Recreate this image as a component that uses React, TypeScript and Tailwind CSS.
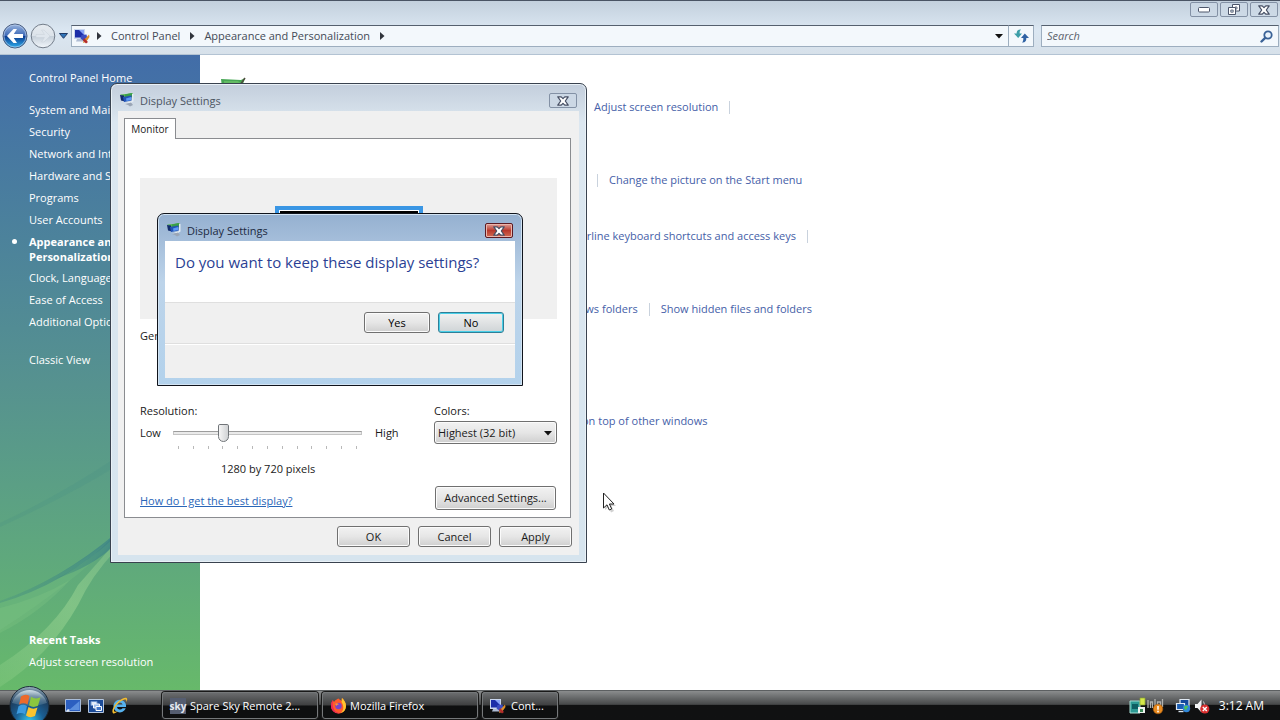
import type { ReactNode } from "react";

const navLink = "block text-white hover:underline";
const button =
  "rounded-[3px] border border-[#707070] bg-linear-to-b from-[#f2f2f2] via-[#e6e6e6] via-50% to-[#cfcfcf] text-center shadow-[inset_0_0_0_1px_#fbfbfb]";

function CloseGlyph() {
  return (
    <svg width="12" height="10" viewBox="0 0 12 10" aria-hidden="true">
      <path
        d="M.8.8h3.400L6 2.700 7.800.8h3.400L8.300 5l2.900 4.200H7.800L6 7.300 4.200 9.200H.8L3.700 5z"
        fill="#fff"
        stroke="#454e63"
        strokeWidth="1.200"
        strokeLinejoin="round"
      />
    </svg>
  );
}

function DisplayIcon() {
  return (
    <svg className="mt-1" width="14" height="14" viewBox="0 0 14 14" aria-hidden="true">
      <path d="M0 1.500l6-.5 7-1v1.500L4 4z" fill="#55b84e" />
      <path d="M5 1.500L11.500 0l1 1v3L8 5.500 5 4z" fill="#3a9e4a" />
      <path d="M0 2l4 .5 1 6L1 7.500z" fill="#122c6c" />
      <path d="M3 4l8.500-1.500v5L4 9z" fill="#2354b8" />
      <path d="M6 5.500l5-1.500v3L6.500 8z" fill="#5c9bf5" />
      <path d="M12 .5l1.500.5v7.500L11 10l-6 .5 7-2.500z" fill="#e4ebf2" />
      <path d="M5 11l6-1.500 2 2.500-3 1.500-2-1.500z" fill="#9aa5b5" />
    </svg>
  );
}

function ControlPanelIcon() {
  return (
    <svg width="16" height="16" viewBox="0 0 16 16" aria-hidden="true">
      <path d="M0 1h11v10H0z" fill="#c9d6ee" />
      <path d="M1 2h9v7.500H1z" fill="#1c2ea8" />
      <path d="M5 2h5v5z" fill="#86a2f6" />
      <path d="M3 11h6l1 2.500H2z" fill="#aebcd4" />
      <path d="M7.500 7l5-.5 1 5-3 2-4-3z" fill="#3b4cc0" />
      <path d="M15 6.500L10 12l-1 3 3-1 3.500-5z" fill="#dd8f2a" />
      <path d="M10 10l4 4-2 1.500-3-3z" fill="#b32c2c" />
    </svg>
  );
}

function Crumb({ children }: { children: ReactNode }) {
  return (
    <>
      <svg width="5" height="8" viewBox="0 0 5 8" aria-hidden="true">
        <path d="M0 0l4.500 4L0 8z" fill="#30343c" />
      </svg>
      {children}
    </>
  );
}

function Header() {
  const winButton =
    "flex h-[15px] w-7 items-center justify-center rounded-[2px] border border-[#8391a5] bg-[#ccd8e5]/70";
  return (
    <header className="flex h-[55px] shrink-0 flex-col border-t border-b border-t-[#4a5464] border-b-[#b3c3d3] bg-linear-to-b from-[#c3d0dd] via-[#dbe7f2] via-55% to-[#d7e1ea]">
      <div className="flex h-6 shrink-0 justify-end gap-[2px] pt-px pr-[2px]">
        <button className={winButton} aria-label="Minimize">
          <svg width="12" height="6" viewBox="0 0 12 6" aria-hidden="true">
            <rect x=".5" y=".5" width="11" height="4.500" rx="1" fill="#fff" stroke="#4d566b" />
          </svg>
        </button>
        <button className={winButton} aria-label="Restore">
          <svg width="12" height="11" viewBox="0 0 12 11" aria-hidden="true">
            <path d="M4.500.5h7v6.500h-7z" fill="#fff" stroke="#4d566b" />
            <path d="M7 3h2v2H7z" fill="#fff" stroke="#4d566b" strokeWidth=".8" />
            <path d="M.5 3.500h7v7h-7z" fill="#fff" stroke="#4d566b" />
            <path d="M2.800 6h2.400v2.200H2.800z" fill="#ccd8e5" stroke="#4d566b" strokeWidth=".8" />
          </svg>
        </button>
        <button className={winButton} aria-label="Close">
          <CloseGlyph />
        </button>
      </div>
      <div className="flex h-[22px] items-center">
        <div className="flex items-center">
          <button aria-label="Back" className="ml-[2px]">
            <svg width="26" height="26" viewBox="0 0 26 26" aria-hidden="true">
              <defs>
                <linearGradient id="back" x1="0" y1="0" x2="0" y2="1">
                  <stop offset="0" stopColor="#9ab5de" />
                  <stop offset=".48" stopColor="#3f6bb8" />
                  <stop offset=".52" stopColor="#0b3c90" />
                  <stop offset="1" stopColor="#2fb2f0" />
                </linearGradient>
              </defs>
              <circle cx="13" cy="13" r="12" fill="url(#back)" stroke="#4c5f80" />
              <circle cx="13" cy="13" r="11" fill="none" stroke="#c2d4ee" strokeOpacity=".6" />
              <path d="M5 13l6.500-7h3.500L11.800 11H21v4h-9.200l3.200 5h-3.500z" fill="#fff" />
            </svg>
          </button>
          <button aria-label="Forward" className="ml-[2px]">
            <svg width="26" height="26" viewBox="0 0 26 26" aria-hidden="true">
              <defs>
                <linearGradient id="fwd" x1="0" y1="0" x2="0" y2="1">
                  <stop offset="0" stopColor="#e6ebf0" />
                  <stop offset=".5" stopColor="#dce3ea" />
                  <stop offset=".52" stopColor="#c6d0da" />
                  <stop offset="1" stopColor="#f2f7fb" />
                </linearGradient>
              </defs>
              <circle cx="13" cy="13" r="11.800" fill="url(#fwd)" stroke="#737d8a" />
              <path d="M20 13l-6-6h-2.500l3 4.500H6v3h8.500l-3 4.500H14z" fill="#dfe6ed" stroke="#c8d0d9" strokeWidth=".5" />
            </svg>
          </button>
          <button aria-label="Recent pages" className="ml-[3px]">
            <svg width="9" height="6" viewBox="0 0 9 6" aria-hidden="true">
              <path d="M.5.5h8l-4 4.800z" fill="#2f74b8" stroke="#1e3a66" />
            </svg>
          </button>
        </div>
        <nav
          aria-label="Address"
          className="ml-[3px] flex h-[22px] min-w-0 flex-1 items-center border border-[#9daebf] border-t-[#55606e] bg-[#f3f8fc] text-[#444b57]"
        >
          <span className="mr-[7px] ml-[2px]">
            <ControlPanelIcon />
          </span>
          <Crumb>
            <a href="#control-panel" className="mr-[10px] ml-[9px]">Control Panel</a>
          </Crumb>
          <Crumb>
            <a href="#appearance" className="mr-[10px] ml-[9px]">Appearance and Personalization</a>
          </Crumb>
          <Crumb>
            <span className="flex-1" />
          </Crumb>
          <button aria-label="Previous locations" className="mr-[5px]">
            <svg width="8" height="5" viewBox="0 0 8 5" aria-hidden="true">
              <path d="M0 0h8L4 4.500z" fill="#111" />
            </svg>
          </button>
        </nav>
        <button
          aria-label="Refresh"
          className="flex h-[22px] w-[25px] items-center justify-center border border-l-0 border-[#9daebf] border-t-[#55606e] bg-[#f3f8fc]"
        >
          <svg width="15" height="14" viewBox="0 0 15 14" aria-hidden="true">
            <path d="M7 .5C3.800.3 2.500 2 2.700 4.500H0L4.200 9 8 4.500H5.700C5.500 2.800 5.900 1.500 7 .5z" fill="#3d9ea8" />
            <path d="M8 13.500c3.200.2 4.500-1.500 4.300-4.500H15l-4.200-4.500L7 9h2.300c.2 1.800-.2 3.500-1.300 4.500z" fill="#2f62a4" />
          </svg>
        </button>
        <form role="search" className="mr-px ml-[7px] flex h-[22px] w-[238px] items-center border border-[#9daebf] border-t-[#55606e] bg-[#f3f8fc] pr-[5px] pl-[5px]">
          <input
            aria-label="Search"
            placeholder="Search"
            className="min-w-0 flex-1 bg-transparent italic outline-none placeholder:text-[#5b626c]"
          />
          <svg width="13" height="13" viewBox="0 0 13 13" aria-hidden="true">
            <circle cx="8" cy="5" r="3.700" fill="#e8f2fb" stroke="#3a6297" strokeWidth="1.800" />
            <path d="M5.200 7.800L1.500 11.500" stroke="#3a6297" strokeWidth="2.400" strokeLinecap="round" />
          </svg>
        </form>
      </div>
    </header>
  );
}

function Sidebar() {
  const items = ["System and Maintenance", "Security", "Network and Internet", "Hardware and Sound", "Programs", "User Accounts"];
  const more = ["Clock, Language, and Region", "Ease of Access", "Additional Options"];
  return (
    <aside className="relative flex w-[200px] shrink-0 flex-col overflow-hidden bg-linear-to-b from-[#426da8] via-[#56928f] via-52% to-[#67b96a] pb-[21px] leading-[15px] whitespace-nowrap text-white">
      <svg className="absolute inset-0 h-full w-full" viewBox="0 0 200 635" preserveAspectRatio="none" aria-hidden="true">
        <defs>
          <linearGradient id="ray" x1="0" y1="1" x2="1" y2="0">
            <stop offset="0" stopColor="#a6dc98" stopOpacity=".2" />
            <stop offset=".6" stopColor="#a6dc98" stopOpacity=".45" />
            <stop offset="1" stopColor="#a6dc98" stopOpacity=".3" />
          </linearGradient>
          <linearGradient id="blade" x1="0" y1="0" x2="1" y2="0">
            <stop offset="0" stopColor="#3f8a7c" stopOpacity=".35" />
            <stop offset="1" stopColor="#3b8288" stopOpacity=".75" />
          </linearGradient>
        </defs>
        <path d="M0 468Q60 440 115 403V412Q70 440 0 472z" fill="#438b84" fillOpacity=".18" />
        <path d="M0 546Q60 525 115 481V486Q70 530 0 575z" fill="#74bd82" fillOpacity=".35" />
        <path d="M0 546Q60 525 115 479V482Q65 529 0 548z" fill="url(#blade)" />
        <path d="M55 524Q90 508 115 479V490Q92 512 55 524z" fill="url(#blade)" />
        <path d="M0 610Q55 575 78 530L115 488V496Q92 520 78 550 50 600 0 632z" fill="url(#ray)" />
        <path d="M0 553Q40 543 70 525 40 558 0 578z" fill="#93d08d" fillOpacity=".2" />
      </svg>
      <nav aria-label="Control Panel" className="relative flex flex-1 flex-col pt-[15px] pl-[29px]">
        <a href="#home" className={navLink}>Control Panel Home</a>
        <ul className="mt-[17px] flex flex-col gap-[7px]">
          {items.map((t) => (
            <li key={t}><a href="#section" className={navLink}>{t}</a></li>
          ))}
          <li className="relative font-bold">
            <span className="absolute top-[5px] -left-[17px] size-[5px] rounded-full bg-white" />
            <a href="#appearance" className={navLink}>Appearance and<br />Personalization</a>
          </li>
          {more.map((t) => (
            <li key={t} className="-mt-px mb-px"><a href="#section" className={navLink}>{t}</a></li>
          ))}
        </ul>
        <a href="#classic" className="mt-[22px] text-white">Classic View</a>
      </nav>
      <section className="relative flex flex-col gap-[7px] pl-[29px]">
        <h2 className="font-bold">Recent Tasks</h2>
        <a href="#resolution" className={navLink}>Adjust screen resolution</a>
      </section>
    </aside>
  );
}

function Content() {
  const row = "flex h-4 items-center gap-[11px]";
  const bar = <span className="h-[13px] w-px bg-[#c9d2dd]" />;
  return (
    <main className="min-w-0 flex-1 overflow-hidden bg-white pt-[22px] leading-4 whitespace-nowrap text-[#4560a8]">
      <div className="flex h-[22px] items-start gap-4 pl-[21px]">
        <svg width="26" height="22" viewBox="0 0 26 22" aria-hidden="true">
          <path d="M0 2l20 1 4-2-2 6v12H2z" fill="#47a754" />
          <path d="M3 4h14l4 3v10H4z" fill="#63bb63" />
          <path d="M24 1l-7 10" stroke="#4c4c3c" strokeWidth="1.500" />
        </svg>
        <h1 className="pt-[5px] text-[16px] leading-5 text-[#1f3f8f]">Personalization</h1>
      </div>
      <div className={`${row} pl-[394px]`}><a href="#a">Adjust screen resolution</a>{bar}</div>
      <div className={`${row} mt-[57px] pl-[397px]`}>{bar}<a href="#b">Change the picture on the Start menu</a></div>
      <div className={`${row} mt-10 pl-[359px]`}><a href="#c">Underline keyboard shortcuts and access keys</a>{bar}</div>
      <div className={`${row} mt-[57px] pl-[330px]`}><a href="#d">Use Windows folders</a>{bar}<a href="#e">Show hidden files and folders</a></div>
      <div className={`${row} mt-24 pl-[382px]`}><a href="#f">on top of other windows</a></div>
    </main>
  );
}

function SettingsWindow() {
  return (
    <section
      aria-label="Display Settings"
      className="absolute top-[83px] left-[110px] flex h-[480px] w-[477px] flex-col rounded-t-[7px] border border-[#39424f] bg-linear-to-b from-[#c3cedc] via-[#dce7f0] via-8% to-[#d6e4ee] px-[7px] pb-[7px] text-[#1a1a1a] shadow-[inset_0_0_0_1px_#e9f1f7]"
    >
      <div className="flex h-[27px] shrink-0 items-center pr-[2px] pl-[2px]">
        <DisplayIcon />
        <h2 className="ml-[6px] flex-1 pt-[6px] text-[#4c5562]">Display Settings</h2>
        <button aria-label="Close settings" className="mt-[6px] flex h-[15px] w-7 items-center justify-center rounded-[2px] border border-[#8391a5] bg-[#ccd8e5]">
          <CloseGlyph />
        </button>
      </div>
      <div className="flex min-h-0 flex-1 flex-col bg-[#f0f0f0] pt-[7px] pr-2 pb-2 pl-[6px]">
        <div role="tablist" className="z-10 -mb-px flex">
          <button role="tab" aria-selected="true" className="h-[21px] w-[52px] border border-b-0 border-[#8a8c90] bg-white text-[10px]">Monitor</button>
        </div>
        <div role="tabpanel" className="flex flex-1 flex-col border border-[#8a8c90] bg-white pt-[39px] pr-[13px] pb-[7px] pl-[15px]">
          <div className="flex h-[141px] justify-center bg-[#f0f0f0] pt-7">
            <div className="h-[90px] w-[148px] border-4 border-[#3a96e4] bg-black shadow-[inset_0_0_0_1px_#fff]" />
          </div>
          <p className="mt-[9px] leading-4">Generic PnP Monitor</p>
          <div className="mt-[59px] flex justify-between">
            <div className="flex w-[270px] flex-col">
              <label htmlFor="resolution" className="leading-4">Resolution:</label>
              <div className="mt-[6px] flex">
                <span className="w-[33px] leading-4">Low</span>
                <div className="-mt-[2px] w-[189px]">
                  <input
                    id="resolution"
                    type="range"
                    min={0}
                    max={12}
                    defaultValue={3}
                    className="block h-[19px] w-full appearance-none bg-transparent [&::-webkit-slider-runnable-track]:h-[4px] [&::-webkit-slider-runnable-track]:border [&::-webkit-slider-runnable-track]:border-[#c4c4c4] [&::-webkit-slider-runnable-track]:border-t-[#9c9c9c] [&::-webkit-slider-runnable-track]:bg-[#eaeaea] [&::-webkit-slider-thumb]:-mt-[8px] [&::-webkit-slider-thumb]:h-[18px] [&::-webkit-slider-thumb]:w-[11px] [&::-webkit-slider-thumb]:appearance-none [&::-webkit-slider-thumb]:rounded-[2px_2px_6px_6px] [&::-webkit-slider-thumb]:border [&::-webkit-slider-thumb]:border-[#707478] [&::-webkit-slider-thumb]:bg-linear-to-r [&::-webkit-slider-thumb]:from-[#f6f6f6] [&::-webkit-slider-thumb]:to-[#d0d2d4]"
                  />
                  <div className="mt-1 flex justify-between px-[5px]">
                    {Array.from({ length: 13 }, (_, i) => (
                      <span key={i} className="h-[3px] w-px bg-[#b9b9b9]" />
                    ))}
                  </div>
                </div>
                <span className="ml-[13px] leading-4">High</span>
              </div>
              <output htmlFor="resolution" className="mt-3 pl-[81px] leading-4">1280 by 720 pixels</output>
              <a href="#help" className="mt-4 self-start leading-4 text-[#2a66b8] underline">How do I get the best display?</a>
            </div>
            <div className="flex w-[123px] flex-col">
              <label htmlFor="colors" className="leading-4">Colors:</label>
              <div className="relative mt-[2px]">
                <select id="colors" className={`${button} h-[23px] w-full appearance-none pl-[3px] text-left`}>
                  <option>Highest (32 bit)</option>
                </select>
                <svg className="pointer-events-none absolute top-[10px] right-[5px]" width="8" height="5" viewBox="0 0 8 5" aria-hidden="true">
                  <path d="M0 0h8L4 4.500z" fill="#111" />
                </svg>
              </div>
              <button className={`${button} mt-[42px] ml-px h-6 w-[121px]`}>Advanced Settings...</button>
            </div>
          </div>
        </div>
        <div className="mt-2 -mr-px flex justify-end gap-2">
          <button className={`${button} h-[21px] w-[73px]`}>OK</button>
          <button className={`${button} h-[21px] w-[73px]`}>Cancel</button>
          <button className={`${button} h-[21px] w-[73px]`}>Apply</button>
        </div>
      </div>
    </section>
  );
}

function ConfirmDialog() {
  return (
    <section
      role="dialog"
      aria-label="Display Settings confirmation"
      className="absolute top-[213px] left-[157px] flex h-[173px] w-[366px] flex-col rounded-t-[7px] border border-[#10141c] bg-linear-to-b from-[#95b0d0] via-[#bdd4ea] via-40% to-[#b3d2ec] px-[7px] pb-[7px] shadow-[inset_0_0_0_1px_#d3e4f3]"
    >
      <div className="flex h-[27px] shrink-0 items-center pr-[2px] pl-[2px]">
        <DisplayIcon />
        <h2 className="ml-[6px] flex-1 pt-[6px] text-[#1d2a42]">Display Settings</h2>
        <button aria-label="Close dialog" className="mt-[6px] flex h-[15px] w-7 items-center justify-center rounded-[2px] border border-[#5c1a22] bg-linear-to-b from-[#dd9c97] via-[#b8382c] via-50% to-[#d06a52] shadow-[inset_0_0_0_1px_#eab5ab]">
          <CloseGlyph />
        </button>
      </div>
      <div className="h-[61px] bg-white pt-[9px] pl-[10px]">
        <p className="text-[15px] leading-6 text-[#2b3f94]">Do you want to keep these display settings?</p>
      </div>
      <div className="flex h-[41px] items-start justify-end gap-2 border-t border-[#dfdfdf] bg-[#f0f0f0] pt-[9px] pr-[11px]">
        <button className={`${button} h-[21px] w-[66px]`}>Yes</button>
        <button className="h-[21px] w-[66px] rounded-[3px] border border-[#2f7f97] bg-linear-to-b from-[#f2f2f2] to-[#cfd4d6] shadow-[inset_0_0_0_1px_#48cfe8]">No</button>
      </div>
      <div className="flex-1 border-t border-[#dfdfdf] bg-[#f0f0f0] shadow-[inset_0_1px_0_#fff]" />
    </section>
  );
}

function StartOrb() {
  return (
    <svg className="absolute -top-[6px] left-[8px]" width="44" height="44" viewBox="0 0 44 44" aria-hidden="true">
      <defs>
        <radialGradient id="orb" cx=".5" cy=".9" r=".9">
          <stop offset="0" stopColor="#35c8ee" />
          <stop offset=".4" stopColor="#1a5f94" />
          <stop offset=".75" stopColor="#1d3c5c" />
          <stop offset="1" stopColor="#9fb6c4" />
        </radialGradient>
        <linearGradient id="gloss" x1="0" y1="0" x2="0" y2="1">
          <stop offset="0" stopColor="#e4f0f5" stopOpacity=".85" />
          <stop offset="1" stopColor="#7fa6bc" stopOpacity=".2" />
        </linearGradient>
      </defs>
      <circle cx="21.500" cy="21" r="19.500" fill="url(#orb)" stroke="#1a2a38" />
      <path d="M4 18a18 17 0 0 1 35 0q-16 6-35 0z" fill="url(#gloss)" />
      <path d="M13 11.500q4.500-3 8.500-.5l-2 8.500q-4-2.500-8.500 0z" fill="#ec6a2c" />
      <path d="M23 11.800q4.500 3 9.500.5l-2.500 8.500q-5 2.500-9-.5z" fill="#8cc63e" />
      <path d="M10.500 21.200q4.500-2.800 8.500-.2l-2 8.300q-4-2.500-8.500 0z" fill="#3c9be0" />
      <path d="M20.500 22q4.500 3 9 .5L27 31q-5 2.500-9-.5z" fill="#fbc42f" />
    </svg>
  );
}

function Taskbar() {
  const task =
    "flex h-[27px] items-center rounded-[3px] border border-[#75787a] bg-linear-to-b from-[#6a6c6e] via-[#3f4041] via-48% to-[#0e0f10] to-52% pl-[7px] text-left text-white shadow-[0_0_0_1px_#1a1a1a]";
  return (
    <footer className="relative flex h-[30px] shrink-0 items-center border-t border-[#5c5f61] bg-linear-to-b from-[#8b8d8e] via-[#47494a] via-46% to-[#101112] to-50% whitespace-nowrap text-white">
      <button aria-label="Start" className="h-full w-[65px] shrink-0"><StartOrb /></button>
      <div className="flex w-[97px] shrink-0 items-center gap-[7px]">
        <button aria-label="Show desktop">
          <svg width="16" height="14" viewBox="0 0 16 14" aria-hidden="true">
            <path d="M.5.5h15v12H.5z" fill="#2c5fc0" stroke="#a8bcd8" />
            <path d="M4 11L14.500 2v9z" fill="#6fa2ea" fillOpacity=".7" />
            <path d="M1 12l2-2 2 1-2 2z" fill="#d8e4f4" />
          </svg>
        </button>
        <button aria-label="Switch windows">
          <svg width="16" height="14" viewBox="0 0 16 14" aria-hidden="true">
            <path d="M.5.5h15v13H.5z" fill="#1d4c98" stroke="#b4c6de" />
            <path d="M3 2.500h6v4H3z" fill="#dfeaf8" stroke="#6c92cc" />
            <path d="M5.500 5h6v4h-6z" fill="#9dbdec" stroke="#f2f7fd" />
            <path d="M8 7.500h5.500v4H8z" fill="#4377c8" stroke="#fff" />
          </svg>
        </button>
        <button aria-label="Internet Explorer">
          <svg width="17" height="17" viewBox="0 0 17 17" aria-hidden="true">
            <path
              fillRule="evenodd"
              d="M15 10H6a3 3 0 0 0 5.500 1.200h3.200A6.300 6.300 0 1 1 15 10zM6 7.600h5.600a2.900 2.900 0 0 0-5.600 0z"
              fill="#56b2ee"
            />
            <path d="M2 16.200C-1 13 7 2 14 .8c3.400-.4 2.200 3.200 1 4.400.5-2 .3-3.200-1.500-2.700C8 4 1.500 12 3.300 14.500c1 .7 2.700 0 3.700-.5-2 1.800-4 3-5 2.200z" fill="#f3bd2f" />
          </svg>
        </button>
      </div>
      <div className="flex min-w-0 flex-1 gap-1">
        <button className={`${task} w-[156px]`}>
          <span aria-hidden="true" className="flex size-4 items-center justify-center bg-[#555d70] text-[10px] leading-3 font-bold text-[#e4e9f2]">sky</span>
          <span className="ml-1">Spare Sky Remote 2...</span>
        </button>
        <button className={`${task} w-[156px]`}>
          <svg width="17" height="17" viewBox="0 0 17 17" aria-hidden="true">
            <path d="M8.500 1.500C10 3 11 3 11.500 4c.5-1 0-2 .5-3 2 2 4 4.500 4 8a7.500 7.500 0 0 1-15 0C1 6 2 4 3 3c.2 1.200.6 1.700 1.500 1.500C5.500 2.500 7 2.500 8.500 1.500z" fill="#ff5a2a" />
            <path d="M12 1c2 2 4 4.500 4 8a7.500 7.500 0 0 1-5 7c3-3 3-7 .5-11 .5-1.500 0-2.500.5-4z" fill="#ffc62e" />
            <path d="M1 9a7.500 7.500 0 0 0 10 7c-4 0-7-2-7.500-5C2.500 9.500 2.500 6 3 3 2 4 1 6 1 9z" fill="#ec2657" />
            <circle cx="8.500" cy="9" r="3.200" fill="#7a45c8" />
            <path d="M5 7c1.500-1.200 3-.5 4 .3-1.500.2-2 .8-2.300 1.700z" fill="#ff9a2e" />
          </svg>
          <span className="ml-[3px]">Mozilla Firefox</span>
        </button>
        <button className={`${task} w-[76px]`}>
          <ControlPanelIcon />
          <span className="ml-[5px]">Cont...</span>
        </button>
      </div>
      <div className="flex items-center pr-4">
        <svg width="36" height="18" viewBox="0 0 36 18" aria-hidden="true">
          <path d="M1 4h10v12H1z" fill="#2d9a94" stroke="#a6ded4" />
          <path d="M3 7h6v5H3z" fill="#0d5e62" />
          <path d="M11 1h5v7h-5z" fill="#d5e84a" stroke="#8aa32e" strokeWidth=".7" />
          <path d="M9 10h7v6H9z" fill="#eef3f0" />
          <path d="M11 12h3v3h-3z" fill="#3a8a58" />
          <path d="M19 3v8M21.500 11V5h2v6M26 2v9M28.500 8h3V5h-3v6M33.500 2v8" stroke="#b0b1ae" strokeWidth="1.300" fill="none" />
          <circle cx="29" cy="12" r="4.800" fill="#e88a1e" stroke="#a85c10" strokeWidth=".6" />
          <path d="M29 9v3.800" stroke="#fff" strokeWidth="1.500" />
          <circle cx="29" cy="14.500" r=".9" fill="#fff" />
        </svg>
        <svg className="ml-[10px]" width="16" height="16" viewBox="0 0 16 16" aria-hidden="true">
          <path d="M5 1.500h9v7H5z" fill="#14499c" stroke="#dfe8f2" strokeWidth="1.200" />
          <path d="M1.500 5.500h8v6h-8z" fill="#1c5fb4" stroke="#dfe8f2" strokeWidth="1.200" />
          <path d="M3.500 13.500h5" stroke="#dfe8f2" strokeWidth="1.400" />
          <circle cx="11.500" cy="10.500" r="3.700" fill="#2f86dc" />
          <path d="M9 9c2-2 4-1 4 0s-2 1-1.500 3.500C10 12 9 11 9 9z" fill="#4cc05a" />
        </svg>
        <svg className="ml-[3px]" width="16" height="16" viewBox="0 0 16 16" aria-hidden="true">
          <path d="M1 6h2.500L7.500 1.500v13L3.500 10H1z" fill="#f2f4f6" />
          <path d="M9.500 3.500q2 3 .5 7" stroke="#c8ccd0" fill="none" />
          <circle cx="10.800" cy="11" r="4.600" fill="#d92f2f" />
          <path d="M8.800 9l4 4M12.800 9l-4 4" stroke="#fff" strokeWidth="1.400" />
        </svg>
        <time className="ml-[9px] text-[12px]">3:12 AM</time>
      </div>
    </footer>
  );
}

export default function App() {
  return (
    <div className="relative flex h-screen flex-col overflow-hidden font-['Open_Sans','Noto_Sans',sans-serif] text-[11px] leading-4">
      <Header />
      <div className="flex min-h-0 flex-1">
        <Sidebar />
        <Content />
      </div>
      <Taskbar />
      <SettingsWindow />
      <ConfirmDialog />
      <svg className="pointer-events-none absolute top-[492px] left-[602px]" width="15" height="21" viewBox="0 0 15 21" aria-hidden="true">
        <path d="M3 3v15l3.500-3 2.500 5.500 3-1.500-2.500-5H14z" fill="#000" fillOpacity=".18" />
        <path d="M1.500 1v15l3.500-3.200 2.300 5.200 2.400-1.100L7.400 12H12z" fill="#fff" stroke="#222" strokeLinejoin="round" />
      </svg>
    </div>
  );
}
